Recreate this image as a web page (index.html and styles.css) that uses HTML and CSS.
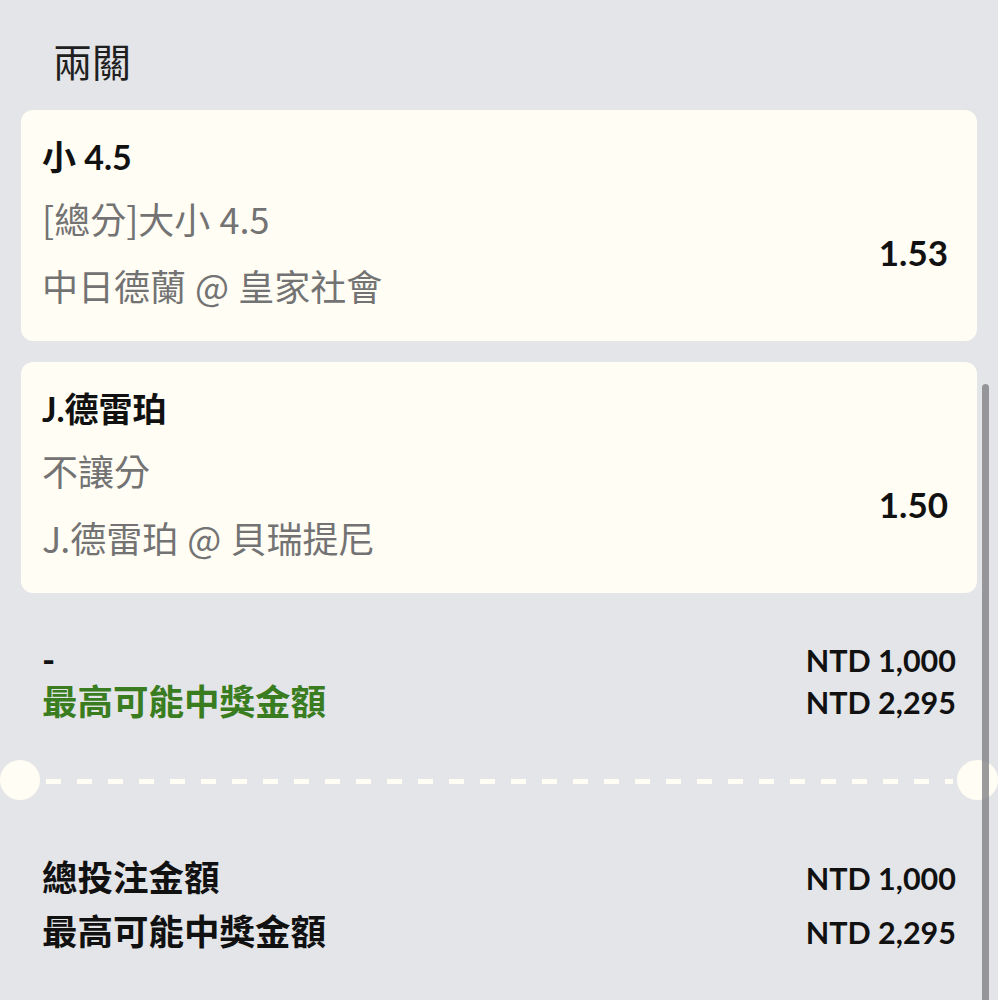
FILE: index.html
```html
<!DOCTYPE html>
<html lang="zh-Hant">
<head>
<meta charset="utf-8">
<title>兩關</title>
<link rel="stylesheet" href="styles.css">
</head>
<body>
<div class="page">
  <div class="header"><h1 class="title">兩關</h1></div>

  <div class="card">
    <div class="pick">小 4.5</div>
    <div class="card-row">
      <div class="info">
        <div class="market">[總分]大小 4.5</div>
        <div class="match">中日德蘭 @ 皇家社會</div>
      </div>
      <div class="odds">1.53</div>
    </div>
  </div>

  <div class="card">
    <div class="pick">J.德雷珀</div>
    <div class="card-row">
      <div class="info">
        <div class="market">不讓分</div>
        <div class="match">J.德雷珀 @ 貝瑞提尼</div>
      </div>
      <div class="odds">1.50</div>
    </div>
  </div>

  <div class="summary">
    <div class="sum-row">
      <span class="sum-label">-</span>
      <span class="amount">NTD 1,000</span>
    </div>
    <div class="sum-row">
      <span class="sum-label green">最高可能中獎金額</span>
      <span class="amount">NTD 2,295</span>
    </div>
  </div>
</div>

<div class="divider">
  <span class="notch"></span>
  <span class="dashes"></span>
  <span class="notch"></span>
</div>

<div class="totals">
  <div class="tot-row">
    <span class="tot-label">總投注金額</span>
    <span class="amount">NTD 1,000</span>
  </div>
  <div class="tot-row">
    <span class="tot-label">最高可能中獎金額</span>
    <span class="amount">NTD 2,295</span>
  </div>
</div>

<div class="scrollbar"></div>
</body>
</html>
```

FILE: styles.css
```css
* { box-sizing: border-box; }

html, body {
  margin: 0;
  padding: 0;
}

body {
  background: #e4e5e8;
  font-family: Lato, "Noto Sans CJK TC", "Noto Sans", sans-serif;
  color: #111;
  width: 998px;
  height: 1000px;
  overflow: hidden;
  position: relative;
}

.page {
  padding: 0 21px;
}

.header {
  height: 110px;
  padding: 38px 0 0 32px;
}

.title {
  margin: 0;
  font-family: "Noto Sans CJK TC", sans-serif;
  font-weight: 400;
  font-size: 39px;
  line-height: 44px;
  color: #1f1f1f;
}

.card {
  background: #fffdf4;
  border-radius: 12px;
  height: 231px;
  padding: 28px 29px 0 21px;
  margin-bottom: 21px;
}

.pick {
  font-weight: 700;
  font-size: 34px;
  line-height: 38px;
  color: #111;
}

.card-row {
  display: flex;
  align-items: center;
  justify-content: space-between;
  margin-top: 19px;
}

.info {
  display: flex;
  flex-direction: column;
  gap: 21px;
}

.market, .match {
  font-family: "Noto Sans CJK TC", "Noto Sans", sans-serif;
  font-size: 36px;
  line-height: 46px;
  word-spacing: 1px;
  color: #737373;
}

.odds {
  font-weight: 700;
  font-size: 35px;
  line-height: 46px;
  color: #111;
}

.summary {
  padding: 25px 21px 0 21px;
}

.sum-row {
  display: flex;
  justify-content: space-between;
  align-items: center;
  height: 42px;
}

.sum-label {
  font-weight: 700;
  font-size: 35.5px;
  line-height: 42px;
}

.green {
  color: #3a7d20;
}

.amount {
  font-weight: 700;
  font-size: 30.5px;
  line-height: 42px;
  color: #111;
}

.divider {
  display: flex;
  align-items: center;
  margin-top: 37px;
  height: 40px;
}

.notch {
  width: 40px;
  height: 40px;
  border-radius: 50%;
  background: #fffdf4;
  flex: none;
}

.notch:last-child {
  margin-left: 4px;
  width: 41px;
}

.dashes {
  flex: 1;
  height: 5px;
  margin: 2px 0 0 6px;
  background: repeating-linear-gradient(to right, #fffdf4 0 15px, transparent 15px 31px);
}

.totals {
  padding: 51px 42px 0 42px;
}

.tot-row {
  display: flex;
  justify-content: space-between;
  align-items: center;
  height: 54px;
}

.tot-label {
  font-weight: 700;
  font-size: 35.5px;
  line-height: 54px;
}

.scrollbar {
  position: absolute;
  left: 982px;
  top: 384px;
  width: 7px;
  height: 640px;
  border-radius: 4px;
  background: rgba(130, 130, 134, 0.8);
}
```
